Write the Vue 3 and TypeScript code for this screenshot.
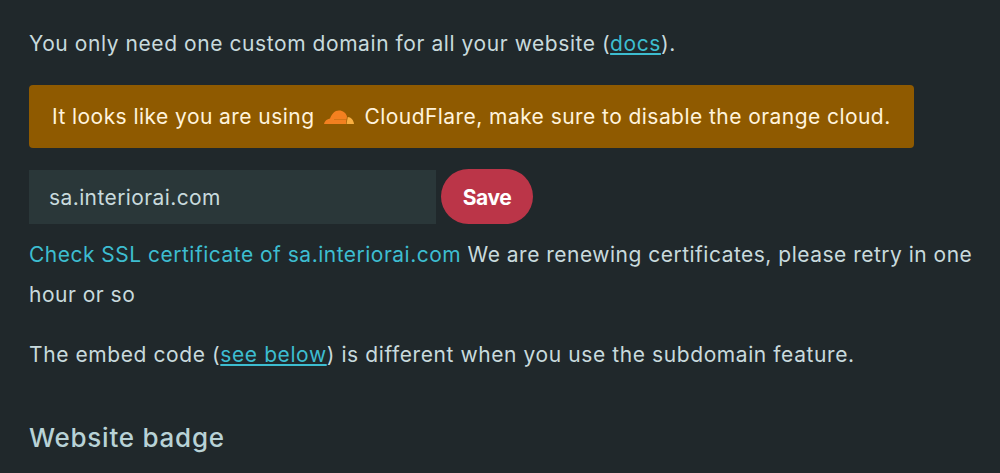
<template>
  <div class="page">
    <p class="intro">You only need one custom domain for all your website (<a href="#">docs</a>).</p>

    <div class="alert">
      <span>It looks like you are using</span>
      <svg class="cloud" viewBox="0 0 30 14" width="30" height="14" aria-hidden="true">
        <path fill="#f38020" d="M0 14C.5 11 3 9 6 8.500 8 4 10.500 .5 15 .5c4 0 7 2.500 8 6L22 14H0z" />
        <path fill="#faae40" d="M22.500 14l1.200-7c3.300 0 5.800 3 6.300 7h-7.500z" />
        <path fill="none" stroke="#8f5a00" stroke-width=".5" opacity=".6" d="M10 9.500h12.500" />
      </svg>
      <span>CloudFlare, make sure to disable the orange cloud.</span>
    </div>

    <form class="domain-form" @submit.prevent>
      <input v-model="domain" class="domain-input" type="text" />
      <button type="submit" class="save-button">Save</button>
    </form>

    <p class="ssl"><a class="plain" href="#">Check SSL certificate of {{ domain }}</a> We are renewing certificates, please retry in one hour or so</p>

    <p class="embed">The embed code (<a href="#">see below</a>) is different when you use the subdomain feature.</p>

    <h2>Website badge</h2>
  </div>
</template>

<script setup lang="ts">
import { ref } from 'vue'

const domain = ref('sa.interiorai.com')
</script>

<style>
html, body {
  margin: 0;
  background: #20282b;
  overflow: hidden;
}
</style>

<style scoped>
.page {
  height: 473px;
  padding: 24px 15px 0 29px;
  box-sizing: border-box;
  overflow: hidden;
  color: #c8dadd;
  font-family: Inter, "Liberation Sans", sans-serif;
  font-size: 21px;
  line-height: 40px;
  letter-spacing: 0.57px;
}

p {
  margin: 0;
}

a {
  color: #3dbdd0;
}

a.plain {
  text-decoration: none;
}

.alert {
  display: flex;
  align-items: center;
  gap: 10px;
  width: 885px;
  height: 63px;
  margin-top: 21px;
  padding: 0 23px;
  box-sizing: border-box;
  background: #8f5a00;
  border-radius: 4px;
  color: #fff3dc;
  letter-spacing: 0.44px;
}

.cloud {
  flex: none;
}

.domain-form {
  display: flex;
  align-items: center;
  gap: 5px;
  margin-top: 21px;
}

.domain-input {
  width: 407px;
  height: 54px;
  padding: 2px 20px 0;
  box-sizing: border-box;
  border: none;
  background: #2a3739;
  color: #c8dadd;
  font: inherit;
  letter-spacing: 0.4px;
}

.save-button {
  width: 92px;
  height: 55px;
  padding: 2px 0 0;
  border: none;
  border-radius: 28px;
  background: #bb3548;
  color: #fff;
  font-family: inherit;
  font-size: 21px;
  font-weight: 700;
  letter-spacing: -0.4px;
}

.ssl {
  margin-top: 11px;
  letter-spacing: 0.49px;
}

.embed {
  margin-top: 20px;
  letter-spacing: 0.59px;
}

h2 {
  margin: 43px 0 0;
  color: #b8d2d6;
  font-size: 26px;
  font-weight: 500;
  line-height: 40px;
  letter-spacing: 0.75px;
}
</style>
